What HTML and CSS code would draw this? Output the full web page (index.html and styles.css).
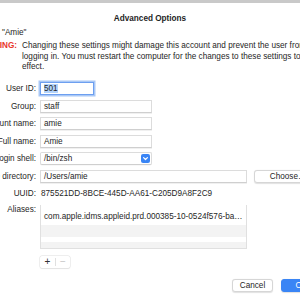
FILE: index.html
```html
<!DOCTYPE html>
<html lang="en">
<head>
  <meta charset="UTF-8">
  <title>Advanced Options</title>
  <link rel="stylesheet" href="styles.css">
</head>
<body>
  <div class="topbar"></div>
  <div class="dialog">
    <h2 class="title">Advanced Options</h2>
    <div class="user">"Amie"</div>

    <div class="warning">
      <span class="warning-label">WARNING:</span>
      <div class="warning-text">
        <span>Changing these settings might damage this account and prevent the user from</span>
        <span>logging in. You must restart the computer for the changes to these settings to take</span>
        <span>effect.</span>
      </div>
    </div>

    <div class="form">
      <label>User ID:</label>
      <div class="field short focused"><span class="selected">501</span></div>

      <label>Group:</label>
      <div class="field mid">staff</div>

      <label>Account name:</label>
      <div class="field mid">amie</div>

      <label>Full name:</label>
      <div class="field mid">Amie</div>

      <label>Login shell:</label>
      <div class="field mid popup">
        <span>/bin/zsh</span>
        <span class="chevron">
          <svg width="9" height="9" viewBox="0 0 9 9"><path d="M2.6 3.6 L4.5 5.5 L6.4 3.6" fill="none" stroke="#fff" stroke-width="1.2" stroke-linecap="round" stroke-linejoin="round"/></svg>
        </span>
      </div>

      <label>Home directory:</label>
      <div class="home-row">
        <div class="field wide">/Users/amie</div>
        <button class="btn choose">Choose…</button>
      </div>

      <label>UUID:</label>
      <div class="uuid">875521DD-8BCE-445D-AA61-C205D9A8F2C9</div>

      <label class="top">Aliases:</label>
      <div>
        <div class="list">
          <div class="row first">com.apple.idms.appleid.prd.000385-10-0524f576-ba…</div>
          <div class="row alt"></div>
          <div class="row thin"></div>
          <div class="row alt last"></div>
        </div>
        <div class="addremove">
          <span class="plus">+</span>
          <span class="sep"></span>
          <span class="minus">−</span>
        </div>
      </div>
    </div>

    <div class="actions">
      <button class="btn cancel">Cancel</button>
      <button class="btn ok">OK</button>
    </div>
  </div>
</body>
</html>
```

FILE: styles.css
```css
body {
  margin: 0;
  width: 300px;
  height: 300px;
  overflow: hidden;
  background: #ffffff;
  font-family: "Liberation Sans", Arial, sans-serif;
  font-size: 8.2px;
  color: #262626;
}

.topbar {
  height: 3px;
  background: #c9c9c9;
}

.dialog {
  width: 380px;
  margin-left: -40px;
}

.title {
  margin: 11px 0 0;
  font-size: 8.2px;
  line-height: 10px;
  text-align: center;
  font-weight: bold;
  color: #1e1e1e;
}

.user {
  margin-top: 4px;
  padding-left: 42px;
  line-height: 10px;
}

.warning {
  display: flex;
  margin-top: 3px;
}

.warning-label {
  width: 57px;
  flex-shrink: 0;
  text-align: right;
  font-weight: bold;
  color: #e8352d;
  line-height: 10.5px;
}

.warning-text {
  display: flex;
  flex-direction: column;
  margin-left: 5px;
  line-height: 10.5px;
  white-space: nowrap;
}

.form {
  display: grid;
  grid-template-columns: 76px 1fr;
  column-gap: 4px;
  row-gap: 4.5px;
  margin-top: 9.5px;
  align-items: center;
}

.form label {
  text-align: right;
  white-space: nowrap;
  line-height: 13px;
}

.form label.top {
  align-self: start;
  line-height: 9px;
}

.field {
  box-sizing: border-box;
  height: 13px;
  line-height: 11px;
  padding: 0 3px;
  background: #fff;
  border: 1px solid #dcdcdc;
  border-bottom-color: #cfcfcf;
  box-shadow: 0 0.5px 0.5px rgba(0, 0, 0, 0.06);
}

.short { width: 54px; }
.mid { width: 112px; }
.wide { width: 207px; }

.focused {
  border: 1px solid #6d9ff0;
  box-shadow: 0 0 0 1.5px #a9c8f6;
}

.selected {
  background: #b3d3fb;
}

.popup {
  position: relative;
  border-radius: 2px;
}

.chevron {
  position: absolute;
  right: 1px;
  top: 1px;
  width: 9px;
  height: 9px;
  border-radius: 2px;
  background: #3a85f5;
  display: flex;
}

.home-row {
  display: flex;
  gap: 7px;
}

.btn {
  box-sizing: border-box;
  height: 13px;
  padding: 0;
  font-family: "Liberation Sans", Arial, sans-serif;
  font-size: 8.2px;
  color: #262626;
  background: #fff;
  border: 0.5px solid #d6d6d6;
  border-radius: 3px;
  box-shadow: 0 0.5px 1px rgba(0, 0, 0, 0.12);
}

.choose {
  width: 68px;
  flex-shrink: 0;
}

.uuid {
  line-height: 13px;
  padding-left: 1px;
}

.list {
  width: 207px;
  box-sizing: border-box;
  border: 1px solid #e0e0e0;
  border-top: none;
}

.row {
  height: 12px;
  padding-left: 3px;
}

.row.first {
  height: 20px;
  line-height: 23px;
}

.row.thin {
  height: 5px;
}

.row.last {
  height: 6px;
}

.row.alt {
  background: #f3f3f3;
}

.addremove {
  display: flex;
  align-items: center;
  width: 30px;
  height: 12px;
  margin-top: 7px;
  background: #fff;
  border-radius: 2px;
  box-shadow: 0 0 0 0.5px #e0e0e0, 0 0.5px 1px rgba(0, 0, 0, 0.1);
  font-size: 10px;
}

.plus {
  width: 15px;
  text-align: center;
  color: #333;
}

.sep {
  width: 1px;
  height: 8px;
  background: #e0e0e0;
}

.minus {
  width: 14px;
  text-align: center;
  color: #c4c4c4;
}

.actions {
  display: flex;
  gap: 8px;
  margin-top: 11px;
  padding-left: 272px;
}

.cancel,
.ok {
  width: 41px;
}

.ok {
  background: #3a85f5;
  border-color: #3a85f5;
  color: #fff;
}
```
